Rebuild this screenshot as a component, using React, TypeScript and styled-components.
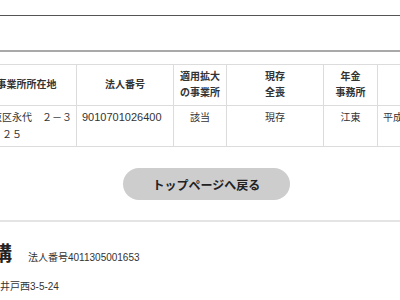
import React from "react";
import styled, { createGlobalStyle } from "styled-components";

const GlobalStyle = createGlobalStyle`
  html, body { margin: 0; padding: 0; background: #fff; overflow: hidden; }
  body {
    font-family: "Liberation Sans", "Noto Sans CJK JP", sans-serif;
    color: #333;
  }
`;

const Page = styled.div`
  width: 400px;
  height: 300px;
  overflow: hidden;
`;

const SearchBar = styled.div`
  margin-top: 15px;
  height: 34px;
  border-top: 1px solid #555;
  border-bottom: 2px solid #a9a9a9;
`;

const Table = styled.table`
  margin-top: 12px;
  margin-left: -24px;
  border-collapse: collapse;
  table-layout: fixed;
  width: 501px;
`;

const Th = styled.th`
  height: 40px;
  padding: 0 3px;
  border: 1px solid #dcdcdc;
  background: #fff;
  font-size: 10px;
  font-weight: bold;
  line-height: 16px;
  color: #333;
  text-align: center;
  vertical-align: middle;
`;

const Td = styled.td<{ $align?: "left" | "center"; $num?: boolean }>`
  height: 34px;
  padding: 3px 5px;
  border: 1px solid #dcdcdc;
  font-size: ${(p) => (p.$num ? "11px" : "10px")};
  line-height: 17px;
  color: #333;
  text-align: ${(p) => p.$align ?? "left"};
  vertical-align: top;
  white-space: nowrap;
`;

const Continued = styled.span`
  display: block;
  padding-left: 20px;
`;

const ButtonRow = styled.div`
  display: flex;
  margin-top: 21px;
  padding-left: 123px;
`;

const BackButton = styled.button`
  width: 167px;
  height: 32px;
  border: none;
  border-radius: 16px;
  background: #cdcdcd;
  color: #222;
  font-family: "Liberation Sans", "Noto Sans CJK JP", sans-serif;
  font-size: 12px;
  font-weight: bold;
  cursor: pointer;
`;

const Divider = styled.div`
  margin-top: 20px;
  border-top: 2px solid #e4e4e4;
`;

const OrgRow = styled.div`
  display: flex;
  align-items: baseline;
  margin-top: 18px;
  white-space: nowrap;
`;

const OrgName = styled.span`
  margin-left: -108px;
  font-size: 20px;
  font-weight: bold;
  color: #222;
  line-height: 28px;
`;

const CorpNo = styled.span`
  margin-left: 16px;
  font-size: 10px;
  color: #333;
`;

const Address = styled.div`
  margin-top: 12px;
  margin-left: -70px;
  font-size: 10px;
  line-height: 14px;
  color: #333;
  white-space: nowrap;
`;

export default function App() {
  return (
    <Page>
      <GlobalStyle />
      <SearchBar />
      <Table>
        <colgroup>
          <col style={{ width: 100 }} />
          <col style={{ width: 97 }} />
          <col style={{ width: 53 }} />
          <col style={{ width: 97 }} />
          <col style={{ width: 54 }} />
          <col style={{ width: 100 }} />
        </colgroup>
        <thead>
          <tr>
            <Th>事業所所在地</Th>
            <Th>法人番号</Th>
            <Th>
              適用拡大
              <br />
              の事業所
            </Th>
            <Th>
              現存
              <br />
              全喪
            </Th>
            <Th>
              年金
              <br />
              事務所
            </Th>
            <Th>適用年月日</Th>
          </tr>
        </thead>
        <tbody>
          <tr>
            <Td>
              江東区永代　２－３
              <Continued>２５</Continued>
            </Td>
            <Td $num>9010701026400</Td>
            <Td $align="center">該当</Td>
            <Td $align="center">現存</Td>
            <Td $align="center">江東</Td>
            <Td>平成</Td>
          </tr>
        </tbody>
      </Table>
      <ButtonRow>
        <BackButton type="button">トップページへ戻る</BackButton>
      </ButtonRow>
      <Divider />
      <OrgRow>
        <OrgName>日本年金機構</OrgName>
        <CorpNo>法人番号4011305001653</CorpNo>
      </OrgRow>
      <Address>東京都杉並区高井戸西3-5-24</Address>
    </Page>
  );
}
